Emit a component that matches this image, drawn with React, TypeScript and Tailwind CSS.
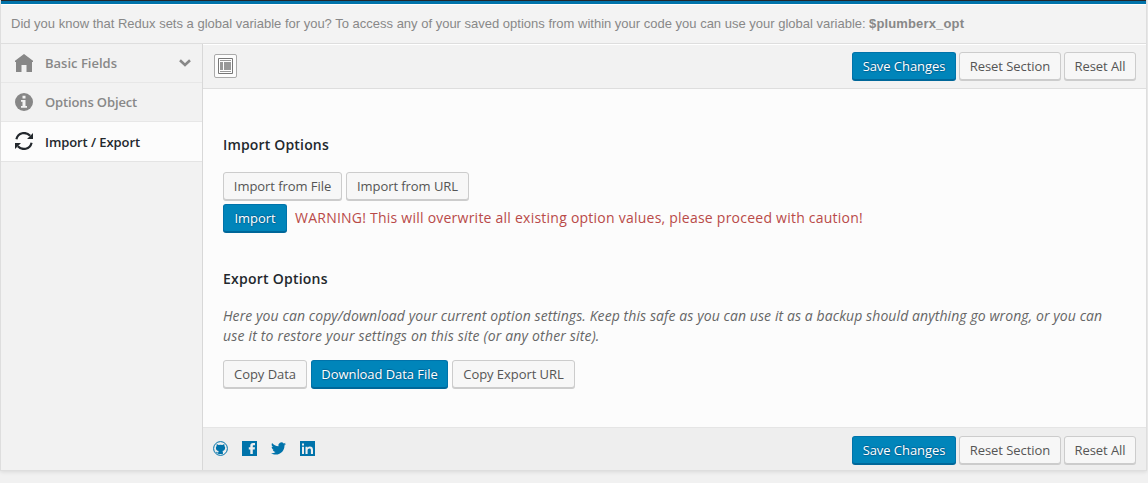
import type { ReactNode } from "react";

function Button({ primary = false, width, children }: { primary?: boolean; width: string; children: ReactNode }) {
  const look = primary
    ? "border-[#0073aa] border-b-[#006799] bg-[#0085ba] text-white shadow-[0_1px_0_#006799] [text-shadow:0_-1px_1px_#006799,1px_0_1px_#006799,0_1px_1px_#006799]"
    : "border-[#cccccc] bg-[#f7f7f7] text-[#555555] shadow-[0_1px_0_#cccccc]";
  return (
    <button className={`${width} ${look} h-7 shrink-0 whitespace-nowrap rounded-[3px] border text-center text-[13px] leading-[26px] tracking-[-0.06px]`}>
      {children}
    </button>
  );
}

function ActionButtons() {
  return (
    <div className="flex gap-[3px]">
      <Button primary width="w-[104px]">Save Changes</Button>
      <Button width="w-[102px]">Reset Section</Button>
      <Button width="w-[72px]">Reset All</Button>
    </div>
  );
}

function HomeIcon() {
  return (
    <svg width="18" height="18" viewBox="0 0 18 18" fill="#878787">
      <path d="M9 0 0 6.800V8h1v10h5.500v-7h5v7H17V8h1V6.800z" />
    </svg>
  );
}

function InfoIcon() {
  return (
    <svg width="18" height="18" viewBox="0 0 18 18">
      <circle cx="9" cy="9" r="9" fill="#878787" />
      <path d="M7.500 2.700h3v2.800h-3zM6 7h4.500v6H12v1.700H6V13h1.500V8.700H6z" fill="#f3f3f3" />
    </svg>
  );
}

function RefreshIcon() {
  return (
    <svg width="18" height="18" viewBox="0 0 18 18" fill="none" stroke="#23282d" strokeWidth="2.2">
      <path d="M1.400 7.200C3 .6 10.600-.9 15.200 3.800M16.600 10.800C15 17.400 7.400 18.900 2.800 14.200" />
      <path d="M18 1v6h-6zM0 17v-6h6z" fill="#23282d" stroke="none" />
    </svg>
  );
}

function LayoutIcon() {
  return (
    <svg width="15" height="16" viewBox="0 0 15 16">
      <path d="M.5.5h14v15H.5z" fill="#fff" stroke="#777" />
      <path d="M2 2h11v1H2zM2 4h3v8H2zM6 4h7v8H6zM2 13h11v1H2z" fill="#999" />
    </svg>
  );
}

function Socials() {
  return (
    <div className="flex items-center gap-[14px] pb-px text-[#0073aa]">
      <svg width="15" height="15" viewBox="0 0 15 15">
        <circle cx="7.5" cy="7.5" r="6.9" fill="none" stroke="currentColor" strokeWidth="1" />
        <path d="M3.700 3.100 5.600 4q1.900-.4 3.800 0l1.900-.9.2 2q1.200 1.400.4 3.200-.7 1.500-2.500 1.800.5.5.5 1.400V13H5.200v-.4c-1.800.2-1.800-1.500-2.600-1.800 1.400-.3 1.700 1 2.600.9 0-.7.2-1.200.6-1.600-2-.3-2.900-1.300-2.900-3q0-1.100.7-2z" fill="currentColor" />
      </svg>
      <svg width="15" height="15" viewBox="0 0 15 15">
        <path d="M0 0h15v15H0z" fill="currentColor" />
        <path d="M8.300 13V8.500H6.800V6.200h1.500V4.800c0-1.900 1-2.800 2.700-2.800H13v2.300h-1.200c-.8 0-1 .3-1 .9v1H13l-.3 2.300h-1.900V13z" fill="#eee" />
      </svg>
      <svg width="15" height="15" viewBox="0 1.500 24 21">
        <path d="M24 4.600c-.9.4-1.800.7-2.800.8 1-.6 1.800-1.600 2.200-2.700-1 .6-2 1-3.100 1.200A4.900 4.900 0 0 0 11.900 8.400C7.700 8.200 4.100 6.200 1.700 3.200.4 5.400 1 8.300 3.200 9.700c-.8 0-1.600-.2-2.200-.6 0 2.300 1.600 4.400 3.900 4.900-.7.2-1.500.2-2.200.1.600 2 2.400 3.400 4.600 3.400A9.900 9.900 0 0 1 0 19.500c2.200 1.400 4.800 2.200 7.500 2.200 9.100 0 14.300-7.700 14-14.600 1-.7 1.800-1.600 2.500-2.500z" fill="currentColor" />
      </svg>
      <svg width="15" height="15" viewBox="0 0 15 15">
        <path d="M0 0h15v15H0z" fill="currentColor" />
        <path d="M2 5.700h2V13H2zM2 2.600h2v1.900H2zM5.500 5.700h2v1c.5-.8 1.300-1.200 2.400-1.200 2 0 3.100 1.200 3.100 3.400V13h-2.100V9.100c0-1.100-.4-1.700-1.400-1.700S7.600 8.100 7.600 9.200V13H5.500z" fill="#eee" />
      </svg>
    </div>
  );
}

export default function App() {
  return (
    <div className="h-[483px] w-[1148px] overflow-hidden bg-[#f1f1f1] font-['Open_Sans',sans-serif]">
      <div className="flex h-[471px] w-[1147px] flex-col border-x border-b border-[#dedede] bg-[#f2f2f2] shadow-[0_1px_4px_rgba(0,0,0,0.1)]">
        <div className="h-1 shrink-0 border-t border-[#23282d] bg-[#0073aa]" />
        <div className="flex h-10 shrink-0 items-center whitespace-nowrap border-b border-t border-b-[#dedede] border-t-white bg-[#f3f3f3] pl-[10px] font-['Liberation_Sans',Arial,sans-serif] text-[13px] text-[#888888]">
          <span className="w-[858px] shrink-0">Did you know that Redux sets a global variable for you? To access any of your saved options from within your code you can use your global variable:</span>
          <b className="tracking-[0.15px]">$plumberx_opt</b>
        </div>
        <div className="flex min-h-0 flex-1">
          <nav className="w-[202px] shrink-0 border-r border-[#d8d8d8] text-[13px] font-semibold text-[#888888]">
            <div className="flex h-[39px] items-center border-b border-[#e7e7e7] pl-[14px]">
              <HomeIcon />
              <span className="ml-3 pt-[2px]">Basic Fields</span>
              <svg className="ml-auto mr-[11px]" width="12" height="8" viewBox="0 0 12 8" fill="none" stroke="#888" strokeWidth="2.6">
                <path d="m1 1.300 5 4.700 5-4.700" />
              </svg>
            </div>
            <div className="flex h-[39px] items-center border-b border-[#e7e7e7] pl-[14px]">
              <InfoIcon />
              <span className="ml-3 pt-[2px] tracking-[-0.14px]">Options Object</span>
            </div>
            <div className="flex h-10 items-center border-b border-[#e4e4e4] bg-[#fcfcfc] pl-[14px] text-[#23282d]">
              <span className="pb-px">
                <RefreshIcon />
              </span>
              <span className="ml-3 pt-[3px] tracking-[-0.08px]">Import / Export</span>
            </div>
          </nav>
          <div className="flex min-w-0 flex-1 flex-col bg-[#fcfcfc]">
            <div className="flex h-[45px] shrink-0 items-center justify-between border-b border-t border-b-[#dedede] border-t-white bg-[#f2f2f2] pb-px pl-[11px] pr-[10px]">
              <div className="flex h-6 w-[23px] items-center justify-center rounded-[2px] border border-[#aaaaaa] bg-[#fcfcfc]">
                <LayoutIcon />
              </div>
              <ActionButtons />
            </div>
            <main className="min-h-0 flex-1 pl-5 pt-[46px]">
              <h3 className="text-sm font-semibold leading-5 tracking-[0.17px] text-[#23282d]">Import Options</h3>
              <div className="mt-[17px] flex gap-1">
                <Button width="w-[119px]">Import from File</Button>
                <Button width="w-[123px]">Import from URL</Button>
              </div>
              <div className="mt-1 flex items-center">
                <Button primary width="w-16">Import</Button>
                <span className="ml-2 whitespace-nowrap text-sm tracking-[0.236px] text-[#b94a48]">WARNING! This will overwrite all existing option values, please proceed with caution!</span>
              </div>
              <h3 className="mt-[37px] text-sm font-semibold leading-5 tracking-[0.24px] text-[#23282d]">Export Options</h3>
              <p className="mt-[17px] whitespace-nowrap text-sm italic leading-5 tracking-[0.087px] text-[#666666]">
                Here you can copy/download your current option settings. Keep this safe as you can use it as a backup should anything go wrong, or you can
                <br />
                <span className="tracking-[0.18px]">use it to restore your settings on this site (or any other site).</span>
              </p>
              <div className="mt-[14px] flex gap-1">
                <Button width="w-[84px]">Copy Data</Button>
                <Button primary width="w-[137px]">Download Data File</Button>
                <Button width="w-[123px]">Copy Export URL</Button>
              </div>
            </main>
            <footer className="flex h-[43px] shrink-0 items-center justify-between border-t border-[#e5e5e5] bg-[#eeeeee] pl-[10px] pr-[10px]">
              <Socials />
              <div className="pt-[2px]">
                <ActionButtons />
              </div>
            </footer>
          </div>
        </div>
      </div>
    </div>
  );
}
